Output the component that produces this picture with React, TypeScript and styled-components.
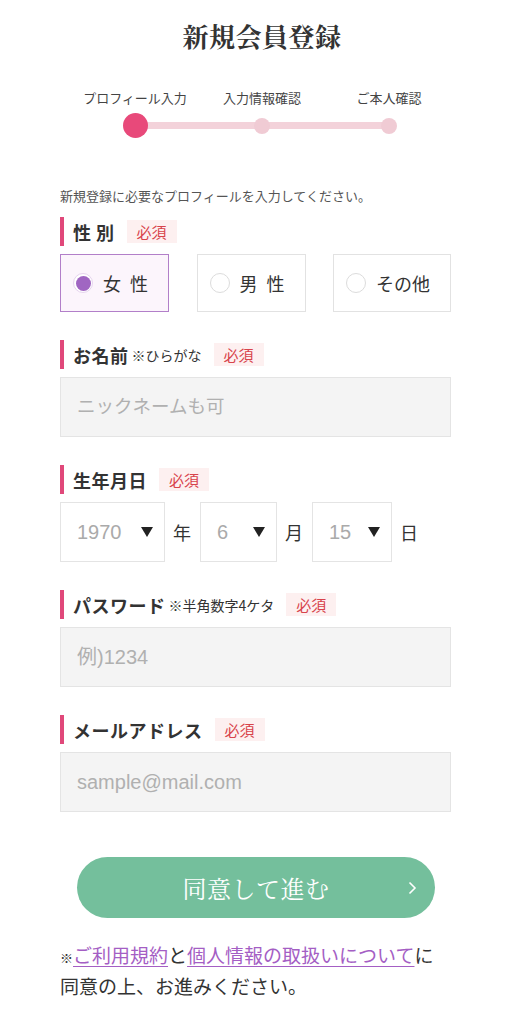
import { createGlobalStyle, styled } from "styled-components";

const GlobalStyle = createGlobalStyle`
  body {
    margin: 0;
    background: #fff;
    color: #333;
    font-family: "Liberation Sans", "Noto Sans CJK JP", sans-serif;
  }
`;

const Page = styled.div`
  width: 524px;
  padding-top: 18px;
  padding-bottom: 40px;
`;

const Title = styled.h1`
  margin: 0;
  text-align: center;
  font-family: "Noto Serif CJK JP", "Noto Sans CJK JP", serif;
  font-size: 26px;
  line-height: 36px;
  font-weight: 700;
  color: #333;
  letter-spacing: 0.5px;
`;

const Steps = styled.div`
  margin-top: 36px;
  display: grid;
  grid-template-columns: repeat(3, 127px);
  justify-content: center;
  position: relative;

  &::before {
    content: "";
    position: absolute;
    left: 135px;
    right: 135px;
    bottom: 9px;
    height: 7px;
    background: #f3d2da;
  }
`;

const Step = styled.div`
  display: flex;
  flex-direction: column;
  align-items: center;
  gap: 7px;
`;

const StepLabel = styled.span`
  font-family: "Noto Sans CJK JP", sans-serif;
  font-size: 13px;
  line-height: 16px;
  color: #444;
  white-space: nowrap;
`;

const DotSlot = styled.div`
  height: 25px;
  display: flex;
  align-items: center;
  justify-content: center;
  position: relative;
  z-index: 1;
`;

const Dot = styled.span<{ $active?: boolean }>`
  width: ${(p) => (p.$active ? 25 : 16)}px;
  height: ${(p) => (p.$active ? 25 : 16)}px;
  border-radius: 50%;
  background: ${(p) => (p.$active ? "#e8497a" : "#f0cbd4")};
`;

const Form = styled.div`
  width: 391px;
  margin: 49px 0 0 60px;
`;

const Intro = styled.p`
  margin: 0;
  font-family: "Noto Sans CJK JP", sans-serif;
  font-size: 13px;
  line-height: 18px;
  color: #555;
`;

const Section = styled.div<{ $first?: boolean }>`
  margin-top: ${(p) => (p.$first ? 12 : 28)}px;
`;

const Label = styled.div`
  display: flex;
  align-items: center;
  height: 29px;
  margin-bottom: 8px;
  border-left: 4px solid #e0487a;
  padding-left: 9px;
`;

const LabelText = styled.span`
  font-family: "Noto Sans CJK JP", sans-serif;
  font-size: 18px;
  font-weight: 700;
  color: #333;
  letter-spacing: 0.5px;
`;

const Note = styled.span`
  font-family: "Noto Sans CJK JP", sans-serif;
  font-size: 14px;
  color: #333;
  margin-left: 3px;
`;

const Badge = styled.span`
  margin-left: 12px;
  height: 23px;
  padding: 0 10px;
  display: inline-flex;
  align-items: center;
  background: #fdf0f0;
  color: #d8434b;
  font-family: "Noto Sans CJK JP", sans-serif;
  font-size: 15px;
`;

const RadioRow = styled.div`
  display: flex;
  justify-content: space-between;
`;

const RadioBox = styled.label<{ $checked?: boolean }>`
  box-sizing: border-box;
  height: 58px;
  display: flex;
  align-items: center;
  gap: 10px;
  padding: 0 20px 0 12px;
  border: 1.5px solid ${(p) => (p.$checked ? "#b27fc9" : "#e2e2e2")};
  background: ${(p) => (p.$checked ? "#fcf5fc" : "#fff")};
`;

const RadioMark = styled.span<{ $checked?: boolean }>`
  box-sizing: border-box;
  width: 20px;
  height: 20px;
  border-radius: 50%;
  border: 1px solid ${(p) => (p.$checked ? "#e6d4ee" : "#dcdcdc")};
  background: #fff;
  display: flex;
  align-items: center;
  justify-content: center;

  &::after {
    content: "";
    width: 15px;
    height: 15px;
    border-radius: 50%;
    background: ${(p) => (p.$checked ? "#a066c2" : "transparent")};
  }
`;

const RadioText = styled.span`
  font-family: "Noto Sans CJK JP", sans-serif;
  font-size: 18px;
  color: #333;
  word-spacing: 5px;
  white-space: pre;
`;

const TextInput = styled.input<{ $size: number }>`
  box-sizing: border-box;
  display: block;
  width: 100%;
  height: 60px;
  padding: 0 16px;
  border: 1.5px solid #e4e4e4;
  border-radius: 0;
  background: #f4f4f4;
  font-family: "Liberation Sans", "Noto Sans CJK JP", sans-serif;
  font-size: ${(p) => p.$size}px;
  color: #333;
  outline: none;

  &::placeholder {
    color: #b0b0b0;
  }
`;

const DateRow = styled.div`
  display: flex;
  align-items: center;
`;

const SelectBox = styled.div<{ $w: number }>`
  box-sizing: border-box;
  width: ${(p) => p.$w}px;
  height: 60px;
  padding: 0 11px 0 16px;
  border: 1.5px solid #e4e4e4;
  display: flex;
  align-items: center;
  justify-content: space-between;
  font-size: 20px;
  color: #aaa;
`;

const Arrow = styled.span`
  width: 0;
  height: 0;
  border-left: 6px solid transparent;
  border-right: 6px solid transparent;
  border-top: 10px solid #222;
`;

const Unit = styled.span`
  font-family: "Noto Sans CJK JP", sans-serif;
  font-size: 18px;
  color: #333;
  margin: 0 9px 0 8px;
`;

const SubmitButton = styled.button`
  margin: 45px 17px 0;
  width: 358px;
  height: 61px;
  border: 0;
  border-radius: 31px;
  background: #74bf9c;
  color: #fff;
  position: relative;
  display: flex;
  align-items: center;
  justify-content: center;
  font-family: "Noto Serif CJK JP", "Noto Sans CJK JP", serif;
  font-size: 24px;
  letter-spacing: 0.5px;
  cursor: pointer;

  svg {
    position: absolute;
    right: 18px;
    top: 50%;
    margin-top: -7px;
  }
`;

const Agreement = styled.p`
  margin: 23px 0 0;
  font-family: "Noto Sans CJK JP", sans-serif;
  font-size: 19px;
  line-height: 28px;
  color: #333;

  small {
    font-size: 13px;
  }

  a {
    color: #a45ec4;
    text-decoration: underline;
    text-underline-offset: 3px;
    text-decoration-thickness: 1px;
  }
`;

const genders = [
  { label: "女 性", checked: true },
  { label: "男 性", checked: false },
  { label: "その他", checked: false },
];

const steps = [
  { label: "プロフィール入力", active: true },
  { label: "入力情報確認", active: false },
  { label: "ご本人確認", active: false },
];

function App() {
  return (
    <Page>
      <GlobalStyle />
      <Title>新規会員登録</Title>

      <Steps>
        {steps.map((s) => (
          <Step key={s.label}>
            <StepLabel>{s.label}</StepLabel>
            <DotSlot>
              <Dot $active={s.active} />
            </DotSlot>
          </Step>
        ))}
      </Steps>

      <Form>
        <Intro>新規登録に必要なプロフィールを入力してください。</Intro>

        <Section $first>
          <Label>
            <LabelText>性 別</LabelText>
            <Badge>必須</Badge>
          </Label>
          <RadioRow>
            {genders.map((g) => (
              <RadioBox key={g.label} $checked={g.checked}>
                <RadioMark $checked={g.checked} />
                <RadioText>{g.label}</RadioText>
              </RadioBox>
            ))}
          </RadioRow>
        </Section>

        <Section>
          <Label>
            <LabelText>お名前</LabelText>
            <Note>※ひらがな</Note>
            <Badge>必須</Badge>
          </Label>
          <TextInput $size={18.5} placeholder="ニックネームも可" />
        </Section>

        <Section>
          <Label>
            <LabelText>生年月日</LabelText>
            <Badge>必須</Badge>
          </Label>
          <DateRow>
            <SelectBox $w={105}>
              1970
              <Arrow />
            </SelectBox>
            <Unit>年</Unit>
            <SelectBox $w={77}>
              6
              <Arrow />
            </SelectBox>
            <Unit>月</Unit>
            <SelectBox $w={80}>
              15
              <Arrow />
            </SelectBox>
            <Unit>日</Unit>
          </DateRow>
        </Section>

        <Section>
          <Label>
            <LabelText>パスワード</LabelText>
            <Note>※半角数字4ケタ</Note>
            <Badge>必須</Badge>
          </Label>
          <TextInput $size={20} placeholder="例)1234" />
        </Section>

        <Section>
          <Label>
            <LabelText>メールアドレス</LabelText>
            <Badge>必須</Badge>
          </Label>
          <TextInput $size={20} placeholder="sample@mail.com" />
        </Section>

        <SubmitButton>
          同意して進む
          <svg width="9" height="14" viewBox="0 0 9 14" fill="none">
            <polyline points="1.5,1.5 7,7 1.5,12.5" stroke="#fff" strokeWidth="1.6" />
          </svg>
        </SubmitButton>

        <Agreement>
          <small>※</small>
          <a href="#terms">ご利用規約</a>と<a href="#privacy">個人情報の取扱いについて</a>に
          <br />
          同意の上、お進みください。
        </Agreement>
      </Form>
    </Page>
  );
}

export default App;
